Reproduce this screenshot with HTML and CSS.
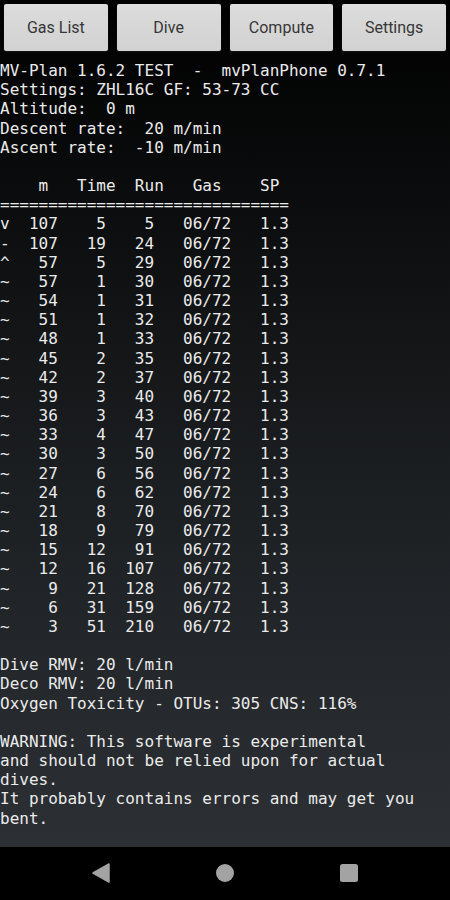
FILE: index.html
```html
<!DOCTYPE html>
<html lang="en">
<head>
    <meta charset="UTF-8">
    <meta name="viewport" content="width=device-width, initial-scale=1.0">
    <title>mvPlanPhone</title>
    <link rel="stylesheet" href="styles.css">
</head>
<body>
    <div class="screen">
        <div class="app">
            <div class="toolbar">
                <button type="button">Gas List</button>
                <button type="button">Dive</button>
                <button type="button">Compute</button>
                <button type="button">Settings</button>
            </div>

            <div class="output">
<pre class="block">MV-Plan 1.6.2 TEST  -  mvPlanPhone 0.7.1
Settings: ZHL16C GF: 53-73 CC
Altitude:  0 m
Descent rate:  20 m/min
Ascent rate:  -10 m/min</pre>
<pre class="block">    m   Time  Run   Gas    SP
==============================
v  107    5    5   06/72   1.3
-  107   19   24   06/72   1.3
^   57    5   29   06/72   1.3
~   57    1   30   06/72   1.3
~   54    1   31   06/72   1.3
~   51    1   32   06/72   1.3
~   48    1   33   06/72   1.3
~   45    2   35   06/72   1.3
~   42    2   37   06/72   1.3
~   39    3   40   06/72   1.3
~   36    3   43   06/72   1.3
~   33    4   47   06/72   1.3
~   30    3   50   06/72   1.3
~   27    6   56   06/72   1.3
~   24    6   62   06/72   1.3
~   21    8   70   06/72   1.3
~   18    9   79   06/72   1.3
~   15   12   91   06/72   1.3
~   12   16  107   06/72   1.3
~    9   21  128   06/72   1.3
~    6   31  159   06/72   1.3
~    3   51  210   06/72   1.3</pre>
<pre class="block">Dive RMV: 20 l/min
Deco RMV: 20 l/min
Oxygen Toxicity - OTUs: 305 CNS: 116%</pre>
<pre class="block">WARNING: This software is experimental
and should not be relied upon for actual
dives.
It probably contains errors and may get you
bent.</pre>
            </div>
        </div>

        <div class="navbar">
            <svg class="nav-icon" width="18" height="20" viewBox="0 0 18 20">
                <path d="M17 1 L17 19 L1 10 Z" fill="#a3a3a3" stroke="#a3a3a3" stroke-width="1.5" stroke-linejoin="round"/>
            </svg>
            <svg class="nav-icon" width="18" height="18" viewBox="0 0 18 18">
                <circle cx="9" cy="9" r="9" fill="#a3a3a3"/>
            </svg>
            <svg class="nav-icon" width="18" height="18" viewBox="0 0 18 18">
                <rect x="0" y="0" width="18" height="18" rx="2.5" fill="#a3a3a3"/>
            </svg>
        </div>
    </div>
</body>
</html>
```

FILE: styles.css
```css
body {
    margin: 0;
    background-color: #000;
    font-family: Roboto, "Noto Sans", sans-serif;
}
.screen {
    width: 450px;
    height: 900px;
    display: flex;
    flex-direction: column;
    overflow: hidden;
}
.app {
    flex: 1;
    background: linear-gradient(#000000 0%, #0c0d0e 25%, #1d2023 60%, #2c3034 100%);
}

/* Top button row */
.toolbar {
    display: grid;
    grid-template-columns: repeat(4, 1fr);
    gap: 9px;
    padding: 4px 4px 0 4px;
}
.toolbar button {
    height: 47px;
    border: none;
    border-radius: 2px;
    background: linear-gradient(#dcdcdc, #d2d2d2);
    box-shadow: 0 1px 2px rgba(255,255,255,0.08);
    color: #363636;
    font-family: Roboto, "Noto Sans", sans-serif;
    font-size: 16px;
    padding: 0;
}

/* Plan output */
.output {
    margin-top: 10px;
}
.block {
    margin: 0 0 19.17px 0;
    font-family: "DejaVu Sans Mono", "Liberation Mono", monospace;
    font-size: 16px;
    line-height: 19.17px;
    color: #ebebeb;
}

/* Android navigation bar */
.navbar {
    height: 55px;
    background-color: #000;
    display: flex;
    align-items: center;
    justify-content: center;
    gap: 106px;
}
.nav-icon {
    display: block;
}
```
